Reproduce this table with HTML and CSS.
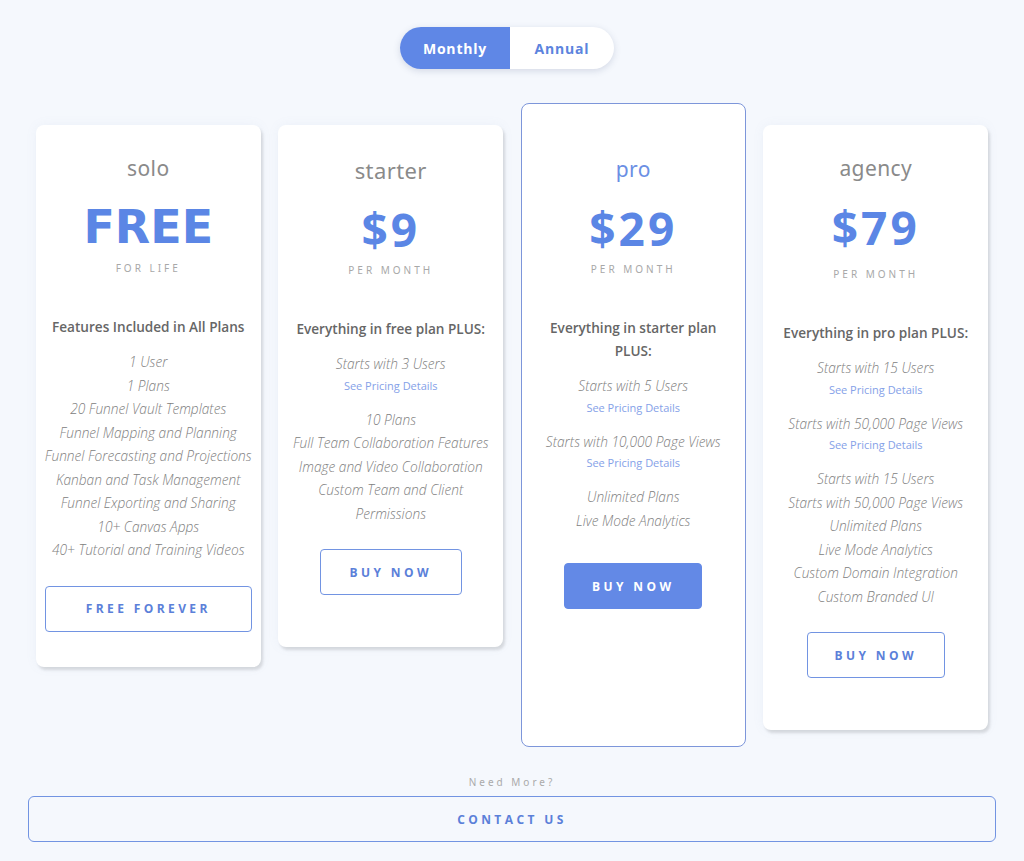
FILE: index.html
```html
<!DOCTYPE html>
<html lang="en">
<head>
<meta charset="utf-8">
<title>Pricing</title>
<link rel="stylesheet" href="styles.css">
</head>
<body>
<main class="page">
  <div class="toggle">
    <button class="toggle-opt toggle-opt--active">Monthly</button>
    <button class="toggle-opt">Annual</button>
  </div>

  <section class="plans">
    <article class="card card--solo">
      <h2 class="plan-name">solo</h2>
      <div class="price price--free">FREE</div>
      <div class="price-sub">FOR LIFE</div>
      <h3 class="feat-head">Features Included in All Plans</h3>
      <ul class="feats">
        <li>1 User</li>
        <li>1 Plans</li>
        <li>20 Funnel Vault Templates</li>
        <li>Funnel Mapping and Planning</li>
        <li>Funnel Forecasting and Projections</li>
        <li>Kanban and Task Management</li>
        <li>Funnel Exporting and Sharing</li>
        <li>10+ Canvas Apps</li>
        <li>40+ Tutorial and Training Videos</li>
      </ul>
      <a class="btn btn--wide">FREE FOREVER</a>
    </article>

    <article class="card card--starter">
      <h2 class="plan-name plan-name--lg">starter</h2>
      <div class="price">$9</div>
      <div class="price-sub">PER MONTH</div>
      <h3 class="feat-head">Everything in free plan PLUS:</h3>
      <div class="group">
        <div class="feat">Starts with 3 Users</div>
        <a class="details">See Pricing Details</a>
      </div>
      <ul class="feats">
        <li>10 Plans</li>
        <li>Full Team Collaboration Features</li>
        <li>Image and Video Collaboration</li>
        <li>Custom Team and Client Permissions</li>
      </ul>
      <a class="btn">BUY NOW</a>
    </article>

    <article class="card card--pro">
      <h2 class="plan-name plan-name--pro">pro</h2>
      <div class="price">$29</div>
      <div class="price-sub">PER MONTH</div>
      <h3 class="feat-head">Everything in starter plan PLUS:</h3>
      <div class="group">
        <div class="feat">Starts with 5 Users</div>
        <a class="details">See Pricing Details</a>
      </div>
      <div class="group">
        <div class="feat">Starts with 10,000 Page Views</div>
        <a class="details">See Pricing Details</a>
      </div>
      <ul class="feats">
        <li>Unlimited Plans</li>
        <li>Live Mode Analytics</li>
      </ul>
      <a class="btn btn--filled">BUY NOW</a>
    </article>

    <article class="card card--agency">
      <h2 class="plan-name">agency</h2>
      <div class="price">$79</div>
      <div class="price-sub">PER MONTH</div>
      <h3 class="feat-head">Everything in pro plan PLUS:</h3>
      <div class="group">
        <div class="feat">Starts with 15 Users</div>
        <a class="details">See Pricing Details</a>
      </div>
      <div class="group">
        <div class="feat">Starts with 50,000 Page Views</div>
        <a class="details">See Pricing Details</a>
      </div>
      <ul class="feats">
        <li>Starts with 15 Users</li>
        <li>Starts with 50,000 Page Views</li>
        <li>Unlimited Plans</li>
        <li>Live Mode Analytics</li>
        <li>Custom Domain Integration</li>
        <li>Custom Branded UI</li>
      </ul>
      <a class="btn">BUY NOW</a>
    </article>
  </section>

  <footer class="more">
    <p class="more-label">Need More?</p>
    <a class="contact">CONTACT US</a>
  </footer>
</main>
</body>
</html>
```

FILE: styles.css
```css
* { box-sizing: border-box; }

html, body {
  margin: 0;
  padding: 0;
  background: #f5f8fd;
}

body {
  font-family: "Open Sans", "Noto Sans", sans-serif;
  color: #777;
}

.page {
  width: 1024px;
  height: 861px;
  padding-top: 27px;
  display: flex;
  flex-direction: column;
  align-items: center;
}

/* toggle */
.toggle {
  display: flex;
  width: 214px;
  height: 42px;
  margin-left: -10px;
  border-radius: 21px;
  background: #fff;
  box-shadow: 0 2px 7px rgba(60, 80, 120, 0.18);
  overflow: hidden;
}

.toggle-opt {
  border: 0;
  margin: 0;
  padding: 0;
  background: transparent;
  font-family: "Open Sans", sans-serif;
  font-weight: 700;
  font-size: 14px;
  letter-spacing: 0.8px;
  color: #5c84de;
  flex: 1 1 104px;
}

.toggle-opt--active {
  flex: 0 0 110px;
  background: #5f87e6;
  color: #fff;
}

/* plans */
.plans {
  display: flex;
  align-items: flex-start;
  gap: 17.5px;
  margin-top: 34px;
}

.card {
  width: 225px;
  background: #fff;
  border-radius: 8px;
  padding: 0 6px 52px;
  text-align: center;
  margin-top: 22px;
  box-shadow: 2px 3px 3px rgba(0, 0, 0, 0.12), 0 0 12px rgba(120, 140, 180, 0.07);
}

.card--solo { padding-bottom: 35px; }
.card--starter { padding-top: 2px; }

.card--pro {
  margin-top: 0;
  height: 644px;
  padding-top: 22px;
  border: 1.5px solid #7d96da;
  box-shadow: none;
}

.plan-name {
  margin: 29px 0 0;
  font-family: "Noto Sans", sans-serif;
  font-weight: 400;
  font-size: 21px;
  line-height: 28px;
  letter-spacing: 0.4px;
  color: #8a8a8a;
}

.plan-name--lg { font-size: 22px; }
.plan-name--pro { color: #6b8fe4; }

.price {
  margin-top: 17px;
  font-family: "Noto Sans", sans-serif;
  font-weight: 700;
  font-size: 46px;
  line-height: 56px;
  letter-spacing: 3px;
  color: #5b86e5;
}

.price--free {
  font-family: "DejaVu Sans", sans-serif;
  letter-spacing: 0;
}

.price-sub {
  margin-top: 6px;
  font-family: "Noto Sans", sans-serif;
  font-size: 10px;
  line-height: 14px;
  letter-spacing: 3px;
  color: #a8a8a8;
}

.card--agency .price-sub { margin-top: 12px; }

.feat-head {
  margin: 40px 0 0;
  font-family: "Open Sans", sans-serif;
  font-weight: 600;
  font-size: 13.6px;
  line-height: 23px;
  color: #666;
}

.card--pro .feat-head { padding: 0 14px; }

.feats {
  list-style: none;
  margin: 12px 0 0;
  padding: 0;
}

.group + .feats { margin-top: 0; }

.feats li,
.feat {
  font-family: "Open Sans", sans-serif;
  font-style: italic;
  font-weight: 300;
  font-size: 13.7px;
  line-height: 23.5px;
  color: #808080;
}

.group {
  margin-top: 12px;
  margin-bottom: 12px;
  display: flex;
  flex-direction: column;
}

.group + .group { margin-top: 0; }

.details {
  font-family: "Open Sans", sans-serif;
  font-size: 11px;
  line-height: 20px;
  color: #85a1e8;
}

.btn {
  display: flex;
  align-items: center;
  justify-content: center;
  width: 142px;
  height: 46px;
  margin: 24px auto 0;
  border: 1px solid #7294e2;
  border-radius: 4px;
  font-family: "Open Sans", sans-serif;
  font-weight: 700;
  font-size: 12px;
  letter-spacing: 3.4px;
  color: #5b80d9;
}

.btn--wide { width: 207px; }

.card--agency .btn { width: 138px; }

.btn--filled {
  width: 138px;
  background: #6389e6;
  border-color: #6389e6;
  color: #fff;
  margin-top: 31px;
}

/* need more */
.more {
  display: flex;
  flex-direction: column;
  align-items: center;
  margin-top: 28px;
}

.more-label {
  margin: 0 0 7px;
  font-family: "Noto Sans", sans-serif;
  font-size: 10px;
  line-height: 14px;
  letter-spacing: 3px;
  color: #aaa;
}

.contact {
  display: flex;
  align-items: center;
  justify-content: center;
  width: 968px;
  height: 46px;
  border: 1px solid #7294e2;
  border-radius: 6px;
  font-family: "Open Sans", sans-serif;
  font-weight: 700;
  font-size: 12px;
  letter-spacing: 3.4px;
  color: #5b80d9;
}
```
